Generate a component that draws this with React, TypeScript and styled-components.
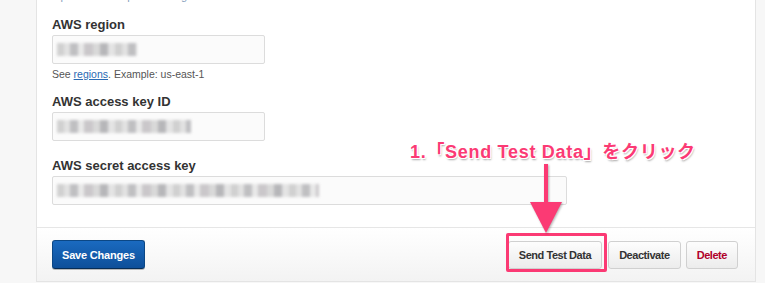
import React from "react";
import styled, { createGlobalStyle } from "styled-components";

const Global = createGlobalStyle`
  html, body { margin: 0; padding: 0; }
  body {
    background: #f7f7f7;
    font-family: "Liberation Sans", Arial, Helvetica, sans-serif;
    width: 765px;
    height: 283px;
    overflow: hidden;
  }
`;

const Page = styled.div`
  display: flex;
  width: 765px;
  height: 283px;
  padding-left: 36px;
  box-sizing: border-box;
`;

const Panel = styled.div`
  position: relative;
  width: 720px;
  height: 282px;
  background: #fff;
  border-left: 1px solid #e4e4e4;
  border-right: 1px solid #e4e4e4;
  border-bottom: 1px solid #e4e4e4;
  box-sizing: border-box;
  display: flex;
  flex-direction: column;
`;

const Body = styled.div`
  flex: 1;
  padding: 0 15px;
  display: flex;
  flex-direction: column;
`;

const TopHint = styled.div`
  margin-top: -10px;
  height: 13px;
  font-size: 11px;
  line-height: 13px;
  color: #8aa0bd;
`;

const Field = styled.div<{ $top: number }>`
  display: flex;
  flex-direction: column;
  margin-top: ${(p) => p.$top}px;
`;

const Label = styled.label`
  font-size: 13px;
  line-height: 16px;
  font-weight: bold;
  color: #333;
  margin-bottom: 2px;
`;

const Input = styled.div<{ $w: number }>`
  width: ${(p) => p.$w}px;
  height: 29px;
  box-sizing: border-box;
  border: 1px solid #dcdcdc;
  border-radius: 2px;
  background: #fbfbfb;
  display: flex;
  align-items: center;
  padding-left: 4px;
`;

const Masked = styled.span<{ $w: number }>`
  display: block;
  width: ${(p) => p.$w}px;
  height: 13px;
  background:
    repeating-linear-gradient(90deg,
      #c9c9c9 0 7px, #dedede 7px 13px, #b5b5b8 13px 21px, #e6e6e6 21px 27px,
      #c2bfc2 27px 36px, #d4d4d4 36px 43px, #ababae 43px 51px, #e0e0e0 51px 58px);
  filter: blur(1.6px);
  opacity: 0.85;
`;

const Help = styled.div`
  font-size: 10.5px;
  line-height: 13px;
  color: #555;
  margin-top: 4px;
  a { color: #2a6ab3; text-decoration: underline; }
`;

const Footer = styled.div`
  height: 54px;
  border-top: 1px solid #e6e6e6;
  background: linear-gradient(#ffffff, #f3f3f3);
  display: flex;
  align-items: center;
  padding: 0 17px 0 15px;
  box-sizing: border-box;
`;

const Spacer = styled.div`
  flex: 1;
`;

const PrimaryButton = styled.button`
  height: 29px;
  padding: 0 9px;
  border: 1px solid #0b4785;
  border-bottom-color: #062c55;
  border-radius: 3px;
  background: linear-gradient(#1a6ac0, #0e4f99);
  color: #fff;
  font-family: "Liberation Sans", Arial, sans-serif;
  font-size: 11px;
  font-weight: bold;
  letter-spacing: -0.2px;
  box-shadow: 0 1px 0 rgba(0,0,0,0.25);
`;

const Button = styled.button<{ $danger?: boolean }>`
  height: 28px;
  padding: 0 10px;
  border: 1px solid #d0d0d0;
  border-radius: 3px;
  background: linear-gradient(#fdfdfd, #ececec);
  color: ${(p) => (p.$danger ? "#b0002a" : "#333")};
  font-family: "Liberation Sans", Arial, sans-serif;
  font-size: 11px;
  font-weight: bold;
  letter-spacing: -0.45px;
  margin-left: 5px;
`;

const HighlightWrap = styled.div`
  position: relative;
  display: flex;
  margin-right: 1px;
`;

const Highlight = styled.div`
  position: absolute;
  top: -8px;
  left: 3px;
  right: -5px;
  bottom: -3px;
  border: 3px solid #fb3a74;
  border-radius: 2px;
  pointer-events: none;
`;

const Callout = styled.div`
  position: absolute;
  left: 373px;
  top: 137px;
  font-family: "Liberation Sans", "Noto Sans CJK JP", sans-serif;
  font-size: 18px;
  font-weight: bold;
  letter-spacing: 0.7px;
  color: #fb3a74;
  white-space: nowrap;
  text-shadow:
    1px 1px 0 #fff, -1px -1px 0 #fff, 1px -1px 0 #fff, -1px 1px 0 #fff,
    1px 2px 2px rgba(0,0,0,0.35);
`;

const Arrow = styled.svg`
  position: absolute;
  left: 492px;
  top: 164px;
  overflow: visible;
  filter: drop-shadow(1px 1px 1px rgba(0,0,0,0.3));
`;

export default function App() {
  return (
    <>
      <Global />
      <Page>
        <Panel>
          <Body>
            <TopHint>Optional. Example: aws-region</TopHint>
            <Field $top={14}>
              <Label>AWS region</Label>
              <Input $w={213}>
                <Masked $w={80} />
              </Input>
              <Help>
                See <a href="#">regions</a>. Example: us-east-1
              </Help>
            </Field>
            <Field $top={13}>
              <Label>AWS access key ID</Label>
              <Input $w={213}>
                <Masked $w={134} />
              </Input>
            </Field>
            <Field $top={17}>
              <Label>AWS secret access key</Label>
              <Input $w={515}>
                <Masked $w={262} />
              </Input>
            </Field>
          </Body>
          <Footer>
            <PrimaryButton>Save Changes</PrimaryButton>
            <Spacer />
            <HighlightWrap>
              <Button>Send Test Data</Button>
              <Highlight />
            </HighlightWrap>
            <Button>Deactivate</Button>
            <Button $danger>Delete</Button>
          </Footer>
          <Callout>1.「Send Test Data」をクリック</Callout>
          <Arrow width="34" height="70" viewBox="0 0 34 70">
            <rect x="15" y="0" width="4" height="40" fill="#fb3a74" />
            <polygon points="1,38 33,38 17,69" fill="#fb3a74" />
          </Arrow>
        </Panel>
      </Page>
    </>
  );
}
